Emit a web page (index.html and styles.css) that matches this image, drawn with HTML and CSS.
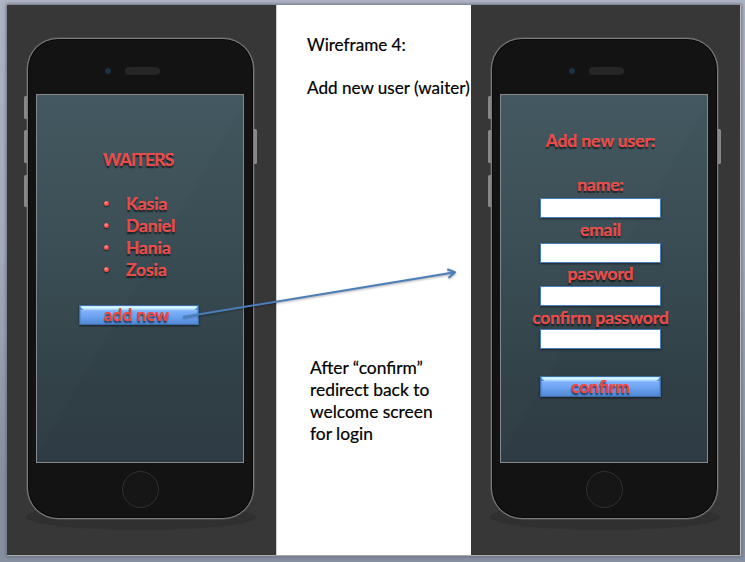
FILE: index.html
```html
<!DOCTYPE html>
<html lang="en">
<head>
<meta charset="utf-8">
<title>Wireframe 4</title>
<link rel="stylesheet" href="styles.css">
</head>
<body>
<main class="slide">
  <section class="panel">
    <div class="floor"></div>
    <div class="phone">
      <i class="key key-mute"></i><i class="key key-up"></i><i class="key key-down"></i><i class="key key-power"></i>
      <div class="top"><i class="camera"></i><i class="speaker"></i></div>
      <div class="screen waiters">
        <h2 class="title">WAITERS</h2>
        <ul class="list">
          <li>Kasia</li>
          <li>Daniel</li>
          <li>Hania</li>
          <li>Zosia</li>
        </ul>
        <button class="button">add new</button>
      </div>
      <div class="home"></div>
    </div>
  </section>
  <section class="notes">
    <p class="n1">Wireframe 4:</p>
    <p class="n2">Add new user (waiter)</p>
    <p class="n3">After “confirm”<br>redirect back to<br>welcome screen<br>for login</p>
  </section>
  <section class="panel">
    <div class="floor"></div>
    <div class="phone">
      <i class="key key-mute"></i><i class="key key-up"></i><i class="key key-down"></i><i class="key key-power"></i>
      <div class="top"><i class="camera"></i><i class="speaker"></i></div>
      <form class="screen signup">
        <h2 class="title">Add new user:</h2>
        <label class="label" for="name">name:</label>
        <input class="field f-name" id="name">
        <label class="label" for="email">email</label>
        <input class="field f-email" id="email">
        <label class="label" for="pw">pasword</label>
        <input class="field f-pw" id="pw">
        <label class="label" for="pw2">confirm password</label>
        <input class="field f-pw2" id="pw2">
        <button class="button" type="button">confirm</button>
      </form>
      <div class="home"></div>
    </div>
  </section>
  <svg class="arrow" width="290" height="70" viewBox="176 260 290 70">
    <g fill="none" stroke="#4a7ebb" stroke-width="2">
      <path d="M183 317L455 272.3"/>
      <path d="M448 269.5L455 272.3L449.2 277.3" stroke-linecap="round" stroke-linejoin="round"/>
    </g>
  </svg>
</main>
</body>
</html>
```
FILE: styles.css
```css
* { box-sizing: border-box; }
body {
  margin: 0;
  width: 745px;
  height: 562px;
  padding: 5px 5px 7px 7px;
  overflow: hidden;
  background: linear-gradient(#adb3c3, #a3aabb 45%, #858fa0 85%, #858f9f);
  font-family: "Lato", sans-serif;
}
.slide {
  position: relative;
  display: flex;
  width: 734px;
  height: 551px;
  border-right: 1px solid #bbb;
  border-bottom: 1px solid #aaa;
  background: #fff;
  box-shadow: 0 0 3px 1px #6b7280;
}
.panel {
  position: relative;
  flex: none;
  width: 269px;
  height: 550px;
  padding: 33px 0 0 20px;
  background: #373737;
}
.floor {
  position: absolute;
  left: 19px;
  top: 499px;
  width: 230px;
  height: 26px;
  border-radius: 50%;
  background: #303030;
}
.phone {
  position: relative;
  display: flex;
  flex-direction: column;
  align-items: center;
  width: 227px;
  height: 481px;
  border: 1px solid #7c7c7c;
  border-radius: 31px;
  background: #131313;
  box-shadow: 0 0 0 .5px #606060, inset 0 0 0 1px #090909;
}
.key {
  position: absolute;
  left: -4px;
  width: 3px;
  border-radius: 1.5px 0 0 1.5px;
  background: #878787;
}
.key-mute { top: 57px; height: 23px; }
.key-up { top: 91px; height: 33px; }
.key-down { top: 136px; height: 32px; }
.key-power { left: auto; right: -4px; top: 90px; height: 35px; border-radius: 0 1.5px 1.5px 0; }
.top {
  display: flex;
  align-items: center;
  gap: 14px;
  width: 100%;
  height: 55px;
  padding: 8px 0 0 77px;
}
.camera { width: 6px; height: 6px; border-radius: 50%; background: #193340; }
.speaker { width: 35px; height: 8px; border-radius: 4px; background: #262626; }
.screen {
  display: flex;
  flex-direction: column;
  align-items: center;
  width: 208px;
  height: 369px;
  margin-left: -1px;
  border: 1px solid #858989;
  background:
    linear-gradient(120.5deg, rgba(255,255,255,.01) 50%, transparent 50.3%),
    linear-gradient(#42565f, #3a4d54 40%, #303f46 80%, #2f3b44);
  color: #e74a48;
  font-size: 17.3px;
  font-weight: 700;
  line-height: 22px;
  text-shadow: 0 1.5px 1.5px rgba(0,0,0,.65), 0 -0.4px 0 #f3817d;
}
.title, .label { font: inherit; margin: 0; display: block; white-space: nowrap; }
.waiters { padding-top: 54px; align-items: flex-start; }
.waiters .title { margin-left: 66px; letter-spacing: -.7px; }
.list { list-style: none; margin: 22px 0 24px 66px; padding: 0; }
.list li { display: flex; align-items: center; height: 22px; }
.list li::before {
  content: "";
  width: 5px;
  height: 5px;
  margin: 0 17px 1px 1px;
  border-radius: 50%;
  background: radial-gradient(circle at 40% 35%, #ffa5a0, #e74a48 50%);
  box-shadow: 0 1px 1.5px rgba(0,0,0,.6);
}
.button {
  position: relative;
  width: 120px;
  height: 20px;
  padding: 0;
  border: 1px solid #3f6da8;
  background:
    linear-gradient(45deg, #5b93d8 2px, transparent 3px) 0 0 / 4px 4px no-repeat,
    linear-gradient(-45deg, #5b93d8 2px, transparent 3px) 100% 0 / 4px 4px no-repeat,
    linear-gradient(#d6f8ff 0 2px, #b3dcff 3px, #80affa 5px, #6ba2f1 11px, #5289d3);
  box-shadow: 0 1px 2px rgba(0,0,0,.55), inset 1px 0 1px rgba(70,125,200,.5), inset -1px 0 1px rgba(70,125,200,.5);
  color: inherit;
  font: inherit;
  line-height: 18px;
  text-shadow: inherit;
}
.waiters .button { margin-left: 42px; padding-right: 5px; }
.signup { padding-top: 35px; padding-right: 7px; }
.signup .title { margin-bottom: 22px; }
.field {
  width: 121px;
  height: 20px;
  padding: 0 4px;
  border: 1px solid #4a7ebb;
  background: #fff;
  box-shadow: 0 1px 2px rgba(0,0,0,.5);
}
.f-name { margin: 2px 0 1px; }
.f-email { margin: 2px 0 0; }
.f-pw { margin: 1px 0; }
.signup .button { margin-top: 27px; height: 21px; width: 121px; }
.home {
  width: 37px;
  height: 37px;
  margin-top: 8px;
  border: 1.5px solid #303030;
  border-radius: 50%;
  background: #161616;
}
.notes {
  flex: none;
  width: 195px;
  padding: 29px 0 0 30px;
  border-left: 1px solid #ccc;
  color: #000;
  font-size: 17.1px;
  line-height: 21.7px;
  white-space: nowrap;
  -webkit-text-stroke: .2px #000;
}
.notes p { margin: 0; }
.notes .n2 { margin-top: 21px; }
.notes .n3 { margin: 259px 0 0 3px; font-size: 17.4px; }
.arrow {
  position: absolute;
  left: 169px;
  top: 255px;
  filter: drop-shadow(0 1.5px 1px rgba(0,0,0,.35));
}
```
